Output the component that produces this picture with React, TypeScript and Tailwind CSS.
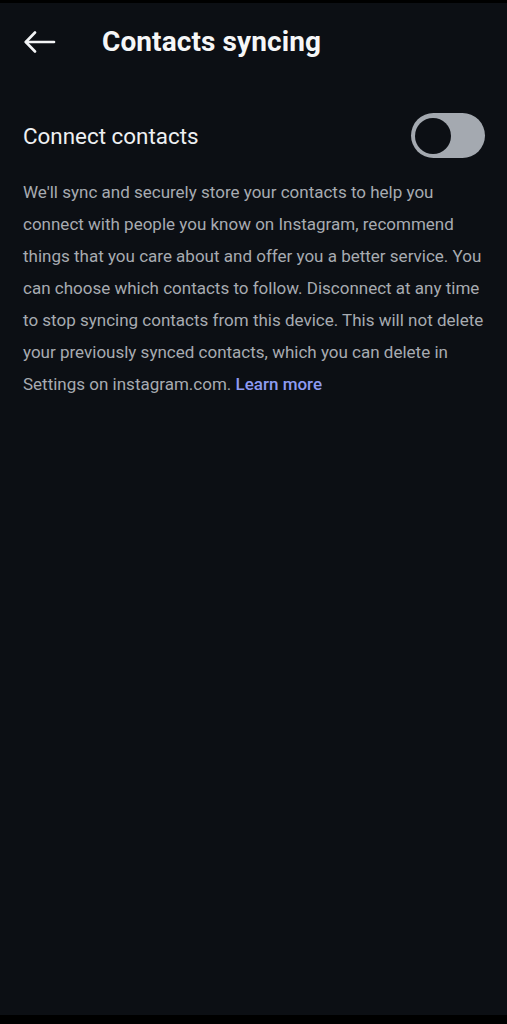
export default function App() {
  return (
    <div className="flex h-[1024px] w-full flex-col bg-black font-['Roboto','Liberation_Sans',sans-serif]">
      <div className="mt-[3px] flex-1 bg-[#0c0f14]">
        <header className="flex h-[78px] items-center pl-[24px]">
          <svg width="32" height="24" viewBox="0 0 32 24" fill="none" stroke="#f3f4f6" strokeWidth="2.6" strokeLinecap="round" strokeLinejoin="round">
            <path d="M30 12H2" />
            <path d="M11 2.5L1.8 12l9.2 9.5" />
          </svg>
          <h1 className="ml-[46px] text-[28px] font-bold tracking-[0.1px] text-[#f5f6f7]">Contacts syncing</h1>
        </header>

        <section className="px-[23px] pt-[32px]">
          <div className="flex items-center justify-between">
            <span className="mt-[2px] text-[22.4px] text-[#eef0f2]">Connect contacts</span>
            <button type="button" aria-label="Connect contacts" className="mr-[-1px] flex h-[45px] w-[74px] items-center rounded-full bg-[#a4a9b0] pl-[4px]">
              <span className="block h-[36px] w-[36px] rounded-full bg-[#0c0f14]"></span>
            </button>
          </div>

          <p className="mt-[18px] text-[17px] leading-[32px] text-[#a7abb1]">
            We'll sync and securely store your contacts to help you connect with people you know on Instagram, recommend things that you care about and offer you a better service. You can choose which contacts to follow. Disconnect at any time to stop syncing contacts from this device. This will not delete your previously synced contacts, which you can delete in Settings on instagram.com. <a href="#" className="font-medium text-[#8d9bf2]">Learn more</a>
          </p>
        </section>
      </div>
      <div className="h-[9px]"></div>
    </div>
  );
}
